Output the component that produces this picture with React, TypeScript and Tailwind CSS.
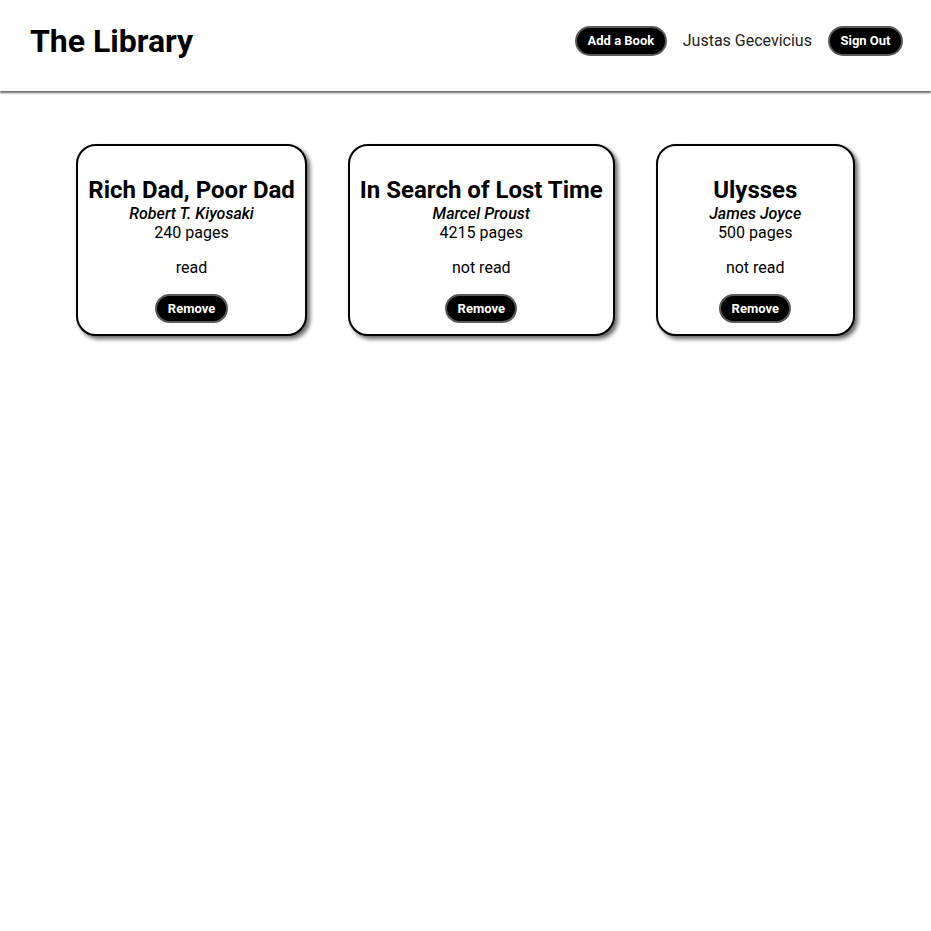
const books = [
  { title: "Rich Dad, Poor Dad", author: "Robert T. Kiyosaki", pages: 240, read: true },
  { title: "In Search of Lost Time", author: "Marcel Proust", pages: 4215, read: false },
  { title: "Ulysses", author: "James Joyce", pages: 500, read: false },
];

function PillButton({ children }: { children: React.ReactNode }) {
  return (
    <button className="h-[30px] rounded-full border-2 border-[#5a5a5a] bg-black px-[10.5px] text-[13px] font-bold text-white">
      {children}
    </button>
  );
}

function BookCard({ title, author, pages, read }: (typeof books)[number]) {
  return (
    <div className="flex min-w-[199px] flex-col items-center rounded-[20px] border-2 border-black bg-white p-[10px] text-center text-black shadow-[3px_3px_4px_#666]">
      <h2 className="mt-[20px] text-2xl leading-[28px] font-bold">{title}</h2>
      <p className="text-base leading-[19px] font-medium italic">{author}</p>
      <p className="text-base leading-[19px]">{pages} pages</p>
      <p className="mt-4 text-base leading-[19px]">{read ? "read" : "not read"}</p>
      <button className="mt-[17px] mb-px h-[29px] rounded-full border-2 border-[#5a5a5a] bg-black px-[10.5px] text-[13px] font-bold text-white">
        Remove
      </button>
    </div>
  );
}

export default function App() {
  return (
    <div className="min-h-screen bg-white font-['Roboto',sans-serif]">
      <header className="flex h-[91px] items-center justify-between pr-[28px] pb-[9px] pl-[30px] shadow-[0_2px_2px_#666]">
        <h1 className="text-[32px] font-bold text-black">The Library</h1>
        <div className="flex items-center gap-4">
          <PillButton>Add a Book</PillButton>
          <span className="text-base text-[#222]">Justas Gecevicius</span>
          <PillButton>Sign Out</PillButton>
        </div>
      </header>
      <main className="flex justify-center gap-[41px] pt-[53px]">
        {books.map((b) => (
          <BookCard key={b.title} {...b} />
        ))}
      </main>
    </div>
  );
}
